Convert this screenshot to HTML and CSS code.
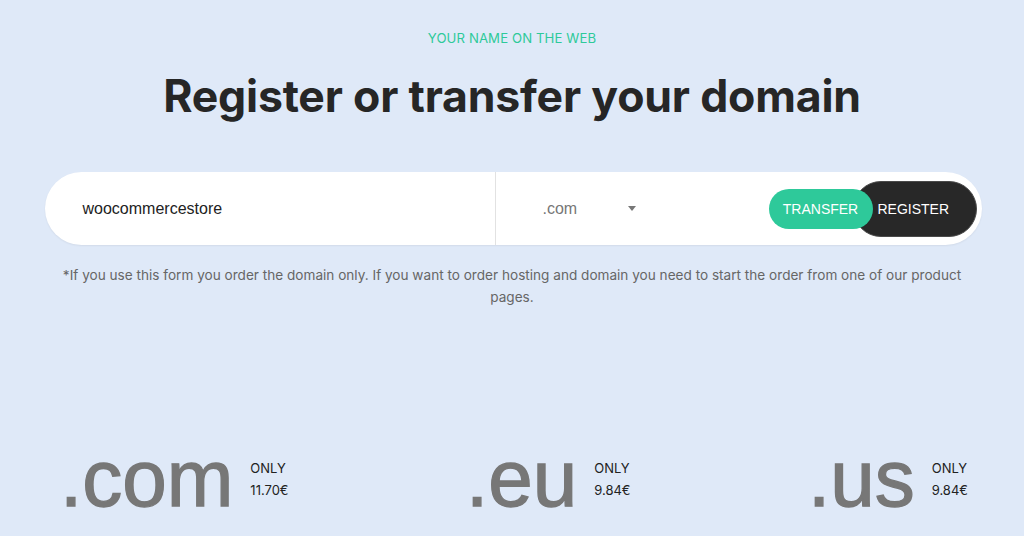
FILE: index.html
```html
<!DOCTYPE html>
<html lang="en">
<head>
<meta charset="utf-8">
<title>Register or transfer your domain</title>
<link rel="stylesheet" href="styles.css">
</head>
<body>
<main class="page">
  <p class="eyebrow">YOUR NAME ON THE WEB</p>
  <h1 class="title">Register or transfer your domain</h1>
  <form class="search">
    <div class="search-input">woocommercestore</div>
    <div class="search-tld">
      <span class="tld-value">.com</span>
      <span class="tld-arrow"></span>
    </div>
    <div class="search-actions">
      <button type="button" class="btn btn-transfer">TRANSFER</button>
      <button type="button" class="btn btn-register">REGISTER</button>
    </div>
  </form>
  <p class="note">*If you use this form you order the domain only. If you want to order hosting and domain you need to start the order from one of our product pages.</p>
  <section class="prices">
    <div class="price">
      <span class="price-tld">.com</span>
      <span class="price-info"><span>ONLY</span><span>11.70€</span></span>
    </div>
    <div class="price">
      <span class="price-tld">.eu</span>
      <span class="price-info"><span>ONLY</span><span>9.84€</span></span>
    </div>
    <div class="price">
      <span class="price-tld">.us</span>
      <span class="price-info"><span>ONLY</span><span>9.84€</span></span>
    </div>
  </section>
</main>
</body>
</html>
```

FILE: styles.css
```css
* { box-sizing: border-box; }
html, body { margin: 0; padding: 0; }
body {
  background: #dfe9f8;
  font-family: Inter, "Noto Sans", sans-serif;
  width: 1024px;
  height: 536px;
  overflow: hidden;
}
.page {
  display: flex;
  flex-direction: column;
  align-items: center;
  padding-top: 30px;
}
.eyebrow {
  margin: 0;
  font-size: 13.2px;
  line-height: 16px;
  color: #2ec99a;
  letter-spacing: 0.1px;
}
.title {
  margin: 22px 0 0;
  font-size: 44.6px;
  line-height: 56px;
  font-weight: 700;
  color: #262626;
  letter-spacing: -0.2px;
}
.search {
  margin: 48px 0 0 2px;
  width: 937px;
  height: 73px;
  background: #fff;
  border-radius: 37px;
  display: flex;
  align-items: center;
  box-shadow: 0 1px 2px rgba(0,0,0,0.06);
}
.search-input {
  width: 451px;
  height: 100%;
  display: flex;
  align-items: center;
  padding-left: 38px;
  font-family: "Liberation Sans", Arial, sans-serif;
  font-size: 16px;
  color: #222;
  border-right: 1px solid #e2e2e2;
}
.search-tld {
  display: flex;
  align-items: center;
  padding-left: 47px;
  width: 270px;
}
.tld-value {
  font-family: "Liberation Sans", Arial, sans-serif;
  font-size: 16px;
  color: #777;
}
.tld-arrow {
  margin-left: 51px;
  width: 0;
  height: 0;
  border-left: 4px solid transparent;
  border-right: 4px solid transparent;
  border-top: 5px solid #777;
}
.search-actions {
  margin-left: auto;
  margin-right: 5px;
  display: flex;
  align-items: center;
}
.btn {
  border: none;
  font-family: "Liberation Sans", Arial, sans-serif;
  font-size: 14px;
  color: #fff;
  cursor: pointer;
}
.btn-transfer {
  position: relative;
  z-index: 1;
  background: #2ec99a;
  height: 40px;
  width: 104px;
  border-radius: 20px;
  padding: 0;
}
.btn-register {
  background: #282828;
  border: 1px solid #4a4a4a;
  height: 56px;
  width: 124px;
  border-radius: 28px;
  margin-left: -20px;
  padding: 0 0 0 24px;
  text-align: left;
}
.note {
  margin: 19px 0 0;
  width: 920px;
  text-align: center;
  font-size: 13.6px;
  line-height: 22px;
  color: #666;
}
.prices {
  margin-top: 149px;
  margin-left: 4px;
  width: 908px;
  display: flex;
  justify-content: space-between;
  align-items: flex-start;
}
.price {
  display: flex;
  align-items: flex-start;
}
.price-tld {
  font-family: "Liberation Sans", Arial, sans-serif;
  font-size: 80px;
  line-height: 44px;
  color: #777;
  -webkit-text-stroke: 1.3px #777;
}
.price-info {
  display: flex;
  flex-direction: column;
  margin-left: 17px;
  font-size: 13px;
  line-height: 22px;
  color: #222;
}
```
